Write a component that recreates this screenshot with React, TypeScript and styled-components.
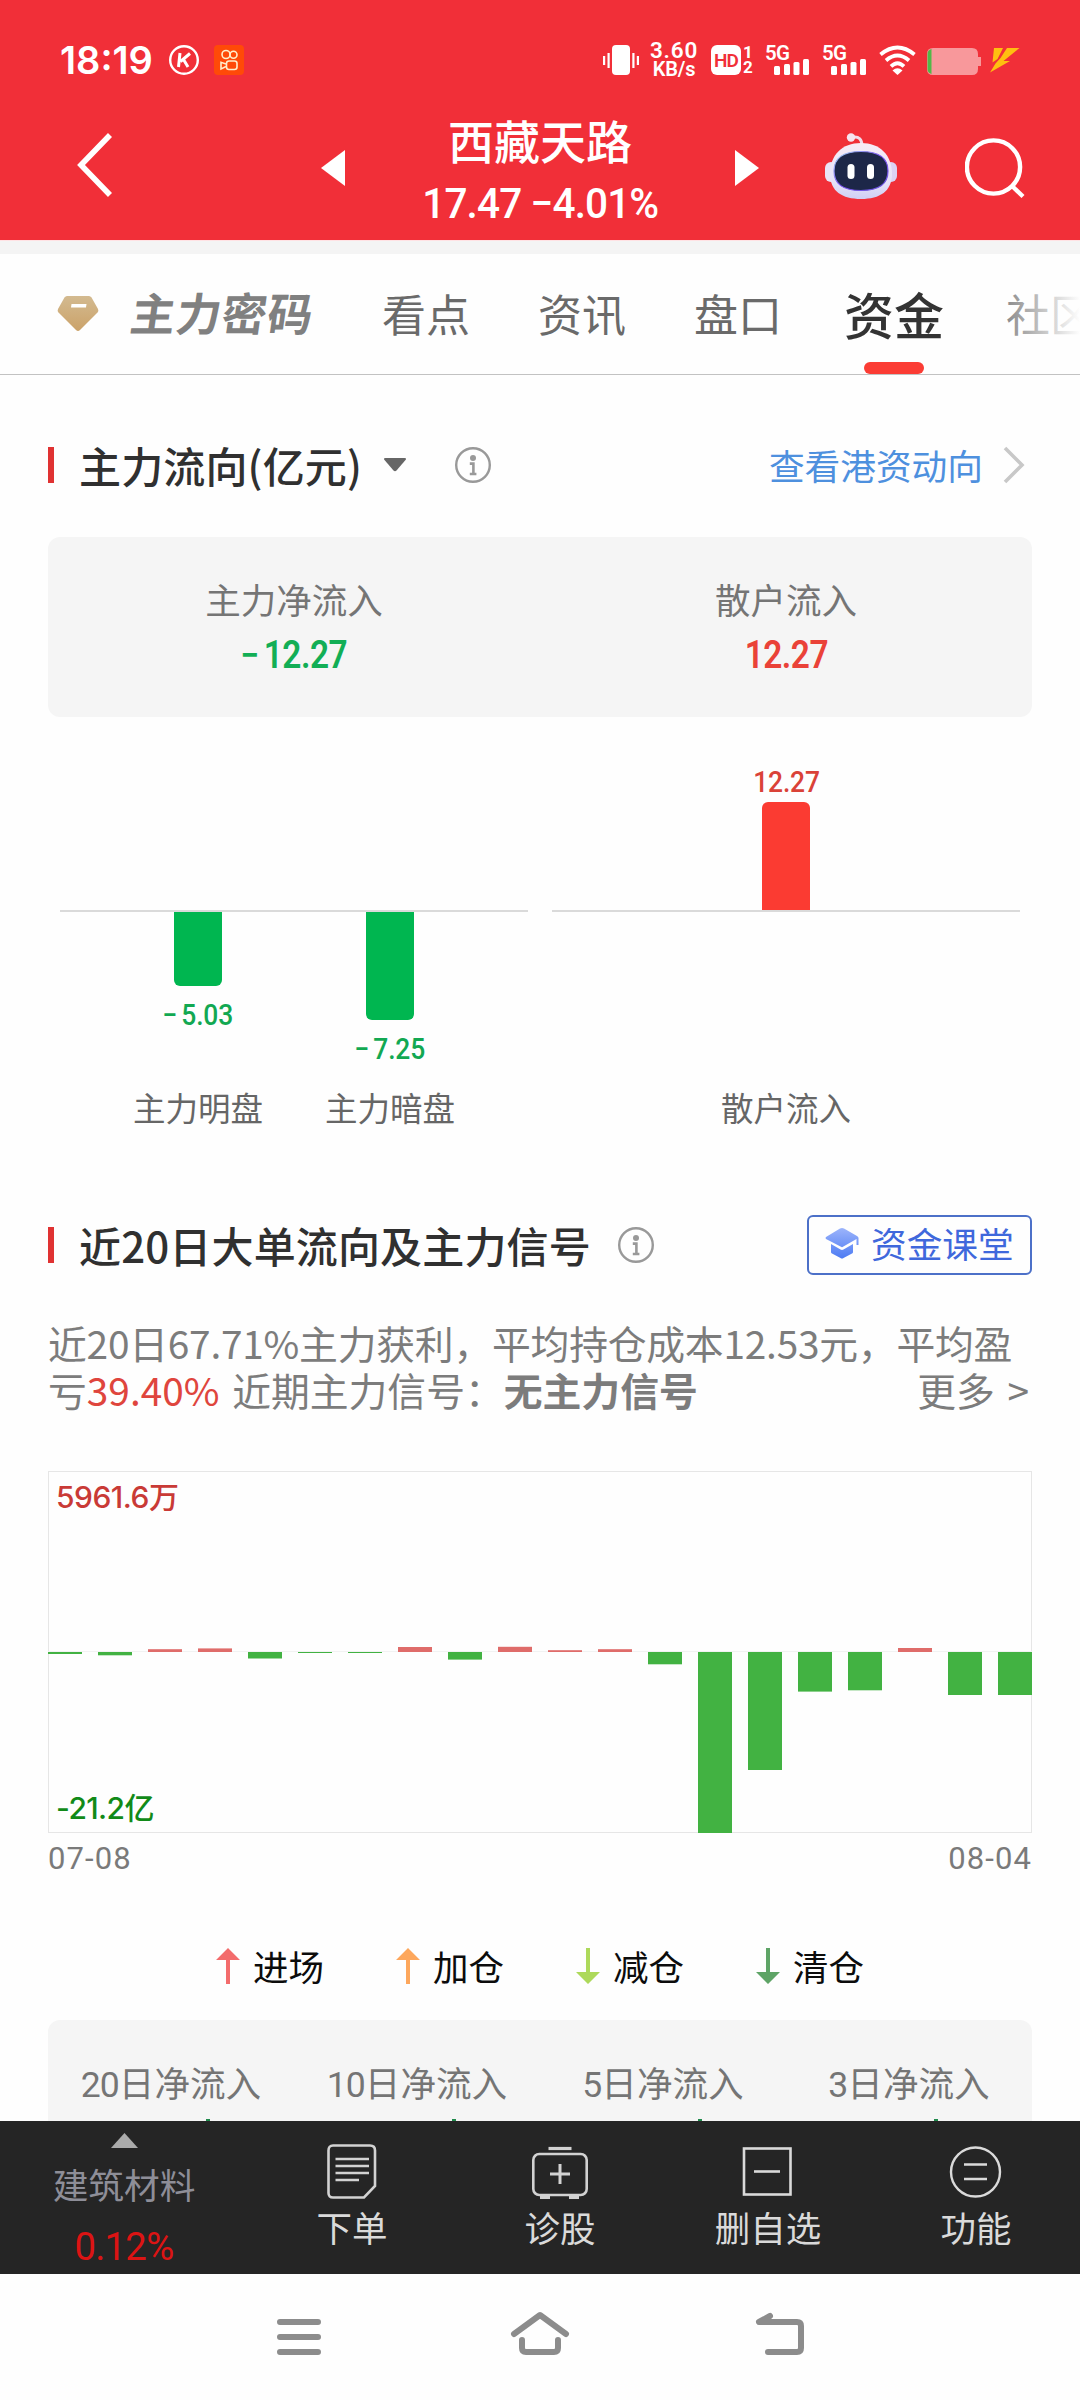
import React from "react";
import styled, { createGlobalStyle } from "styled-components";

const CJK = `"Noto Sans CJK SC", "Noto Sans", sans-serif`;
const NUM = `Roboto, "Noto Sans CJK SC", sans-serif`;

const Global = createGlobalStyle`
  * { box-sizing: border-box; }
  body { margin: 0; background: #fefefe; font-family: ${CJK}; }
  svg { display: block; flex: none; }
`;

const Screen = styled.div`
  width: 1080px;
  height: 2400px;
  overflow: hidden;
  display: flex;
  flex-direction: column;
  background: #fefefe;
`;

/* ---------- status bar ---------- */
const StatusBar = styled.div`
  height: 106px;
  padding: 14px 60px 0 60px;
  background: #f12f38;
  color: #fff;
  display: flex;
  align-items: center;
  font-family: ${NUM};
`;
const Clock = styled.span`
  font: 600 38px/50px Inter, ${NUM};
  letter-spacing: 0;
  width: 109px;
  white-space: nowrap;
`;
const StatusRight = styled.div`
  margin-left: auto;
  display: flex;
  align-items: center;
`;
const Speed = styled.div`
  width: 60px;
  margin-left: 5px;
  margin-right: 7px;
  display: flex;
  flex-direction: column;
  align-items: center;
  font: 600 22.5px/19px ${NUM};
  letter-spacing: 0.8px;
  white-space: nowrap;
`;
const SpeedUnit = styled.span`
  font-size: 20px;
  letter-spacing: -0.2px;
`;
const HdWrap = styled.div`
  display: flex;
  width: 54px;
  gap: 2px;
`;
const HdBadge = styled.div`
  width: 30px;
  height: 30px;
  border-radius: 6px;
  background: #fff;
  color: #f12f38;
  font: 600 19px/31px ${NUM};
  letter-spacing: -1px;
  text-align: center;
`;
const SimNumbers = styled.div`
  height: 30px;
  font: 700 17px/15px ${NUM};
  display: flex;
  flex-direction: column;
  align-items: center;
  justify-content: space-between;
`;
const Signal = styled.div`
  width: 57px;
  height: 30px;
  display: flex;
  position: relative;
`;
const SignalLabel = styled.span`
  font: 600 20.5px/16px ${NUM};
  letter-spacing: -0.8px;
`;
const SignalBars = styled.svg`
  position: absolute;
  left: 9px;
  bottom: 0;
`;

/* ---------- title bar ---------- */
const TitleBar = styled.div`
  height: 134px;
  padding-bottom: 6px;
  background: #f12f38;
  color: #fff;
  display: flex;
  align-items: center;
`;
const BackSlot = styled.div`
  padding: 0 209px 8px 77px;
`;
const StockTitle = styled.div`
  width: 390px;
  display: flex;
  flex-direction: column;
  align-items: center;
`;
const StockName = styled.div`
  padding-top: 6px;
  font: 500 46px/62px ${CJK};
`;
const StockPrice = styled.div`
  font: 500 42px/68px ${NUM};
  letter-spacing: -0.9px;
  transform: scaleX(0.965);
  white-space: pre;
`;
const RobotSlot = styled.div`
  padding: 0 68px 6px 66px;
`;

/* ---------- tabs ---------- */
const Gap = styled.div`
  height: 14px;
  background: #f4f4f4;
  border-top: 1px solid #ffe2e4;
`;
const Tabs = styled.div`
  height: 121px;
  border-bottom: 1px solid #c2c2c2;
  display: flex;
  align-items: stretch;
  position: relative;
  overflow: hidden;
`;
const VipTab = styled.div`
  width: 348px;
  flex: none;
  padding-left: 48px;
  display: flex;
  align-items: center;
  gap: 23px;
`;
const VipLabel = styled.span`
  padding-bottom: 4px;
  font: 700 45px/60px ${CJK};
  letter-spacing: 0.6px;
  color: #808080;
  transform: skewX(-8deg);
`;
const Tab = styled.div<{ $active?: boolean }>`
  width: 156px;
  flex: none;
  height: 120px;
  display: flex;
  flex-direction: column;
  align-items: center;
  padding-top: ${(p) => (p.$active ? 28 : 29)}px;
  font: ${(p) => (p.$active ? "500 50px/62px" : "400 44px/60px")} ${CJK};
  color: ${(p) => (p.$active ? "#333" : "#6a6a6a")};
`;
const Indicator = styled.div`
  width: 60px;
  height: 12px;
  margin-top: 18px;
  border-radius: 6px;
  background: #fb3c34;
`;
const TabFade = styled.div`
  position: absolute;
  right: 0;
  top: 0;
  width: 96px;
  height: 120px;
  background: linear-gradient(90deg, rgba(254, 254, 254, 0), #fefefe);
`;

/* ---------- content ---------- */
const Content = styled.div`
  height: 1746px;
  overflow: hidden;
  padding: 0 48px;
  display: flex;
  flex-direction: column;
`;
const SectionHead = styled.div<{ $top: number; $bottom: number }>`
  margin: ${(p) => p.$top}px 0 ${(p) => p.$bottom}px;
  height: 60px;
  flex: none;
  display: flex;
  align-items: center;
`;
const Marker = styled.i`
  width: 6px;
  height: 36px;
  background: #e03232;
  margin-right: 25px;
`;
const SectionTitle = styled.h2`
  margin: 0;
  font: 500 42px/60px ${CJK};
  letter-spacing: 0.15px;
  color: #303030;
  white-space: nowrap;
`;
const InfoSlot = styled.div<{ $left: number }>`
  margin-left: ${(p) => p.$left}px;
`;
const LinkMore = styled.div`
  margin-left: auto;
  padding-right: 7px;
  display: flex;
  align-items: center;
  gap: 20px;
  font: 400 35.7px/58px ${CJK};
  color: #4e90de;
`;
const ClassButton = styled.div`
  margin-left: auto;
  width: 225px;
  height: 60px;
  border: 2px solid #4c70c8;
  border-radius: 6px;
  padding: 0 0 4px 16px;
  display: flex;
  align-items: center;
  gap: 12px;
  font: 400 35.7px/54px ${CJK};
  color: #3f68dc;
  white-space: nowrap;
`;

const Card = styled.div`
  height: 180px;
  flex: none;
  border-radius: 12px;
  background: #f5f5f5;
  display: flex;
  padding-top: 38px;
`;
const Metric = styled.div`
  flex: 1;
  display: flex;
  flex-direction: column;
  align-items: center;
`;
const MetricLabel = styled.span`
  font: 400 35.5px/48px ${CJK};
  color: #757575;
`;
const MetricValue = styled.span<{ $up?: boolean }>`
  margin-top: 2px;
  font: 600 38px/60px ${NUM};
  letter-spacing: -0.6px;
  transform: scaleX(0.88);
  color: ${(p) => (p.$up ? "#ea4238" : "#12ae55")};
`;
const Minus = styled.span`
  margin-right: 0.16em;
`;

const FlowChart = styled.div`
  display: flex;
  gap: 24px;
  padding: 0 12px;
`;
const Panel = styled.div`
  width: 468px;
  display: grid;
  grid-template-rows: 195px 171px 47px;
`;
const PanelRow = styled.div<{ $axis?: boolean }>`
  display: flex;
  justify-content: center;
  border-bottom: ${(p) => (p.$axis ? "2px solid #dadada" : "none")};
`;
const BarCell = styled.div<{ $end?: boolean }>`
  width: 192px;
  display: flex;
  flex-direction: column;
  align-items: center;
  justify-content: ${(p) => (p.$end ? "flex-end" : "flex-start")};
  font: 400 32.5px/48px ${CJK};
  color: #666;
`;
const FlowBar = styled.div<{ $up?: boolean }>`
  width: 48px;
  border-radius: ${(p) => (p.$up ? "6px 6px 0 0" : "0 0 6px 6px")};
  background: ${(p) => (p.$up ? "#fb3b32" : "#00b650")};
`;
const FlowValue = styled.span<{ $up?: boolean }>`
  margin-top: ${(p) => (p.$up ? 0 : 9)}px;
  font: 500 29px/40px ${NUM};
  letter-spacing: -0.2px;
  transform: scaleX(0.91);
  color: ${(p) => (p.$up ? "#da4238" : "#12a852")};
`;

const Paragraph = styled.div`
  padding-top: 1px;
  font: 400 38.8px/47px ${CJK};
  color: #7c7c7c;
  white-space: pre;
`;
const ParagraphLine = styled.div<{ $tight?: boolean }>`
  height: 47px;
  display: flex;
  justify-content: space-between;
  letter-spacing: ${(p) => (p.$tight ? "-0.22px" : "0")};
  word-spacing: ${(p) => (p.$tight ? "0" : "4px")};
  padding-right: 3px;
`;
const Rate = styled.span`
  color: #df453d;
`;
const Strong = styled.b`
  font-weight: 700;
`;

const SignalChart = styled.div`
  margin-top: 58px;
  height: 362px;
  flex: none;
  position: relative;
  padding: 2px 8px 1px;
  display: flex;
  flex-direction: column;
  justify-content: space-between;
  align-items: flex-start;
`;
const ChartCanvas = styled.svg`
  position: absolute;
  left: 0;
  top: 0;
`;
const ScaleLabel = styled.span<{ $up?: boolean }>`
  position: relative;
  font: 500 30px/48px Inter, ${CJK};
  letter-spacing: ${(p) => (p.$up ? -0.5 : -0.6)}px;
  color: ${(p) => (p.$up ? "#c93a36" : "#118a18")};
`;
const Dates = styled.div`
  height: 50px;
  flex: none;
  padding-top: 1px;
  display: flex;
  justify-content: space-between;
  font: 400 31px/50px ${NUM};
  letter-spacing: 1.1px;
  color: #7a7a7a;
`;
const Legend = styled.div`
  margin: 59px 0 30px;
  padding-left: 168px;
  height: 48px;
  flex: none;
  display: flex;
`;
const LegendItem = styled.div`
  width: 180px;
  display: flex;
  align-items: center;
  gap: 13px;
  font: 400 35.5px/48px ${CJK};
  color: #0c0c0c;
`;
const NetTable = styled.div`
  height: 180px;
  flex: none;
  border-radius: 12px;
  background: #f5f5f5;
  display: flex;
  padding-top: 41px;
`;
const NetCell = styled.div`
  width: 246px;
  display: flex;
  flex-direction: column;
  align-items: center;
  font: 400 35.6px/48px ${NUM};
  color: #757575;
`;
const Days = styled.span`
  letter-spacing: -1px;
`;
const NetTick = styled.i<{ $shift: number }>`
  width: 4px;
  height: 3px;
  margin: 10px 0 0 ${(p) => p.$shift * 2}px;
  background: #1f8a4c;
`;

/* ---------- toolbar ---------- */
const Toolbar = styled.div`
  height: 153px;
  flex: none;
  background: #252525;
  display: flex;
`;
const Sector = styled.div`
  width: 248px;
  padding-top: 12px;
  display: flex;
  flex-direction: column;
  align-items: center;
`;
const SectorName = styled.span`
  margin-top: 12px;
  font: 400 35.7px/48px ${CJK};
  color: #8e8e98;
`;
const SectorRate = styled.span`
  margin-top: 15px;
  font: 400 39.5px/48px ${NUM};
  letter-spacing: -0.8px;
  transform: scaleX(0.97);
  color: #dc1414;
`;
const Tool = styled.div`
  width: 208px;
  padding-top: 22px;
  display: flex;
  flex-direction: column;
  align-items: center;
  font: 400 35.5px/44px ${CJK};
  color: #dadada;
`;
const ToolIcon = styled.svg`
  margin-bottom: 6px;
`;
const SystemNav = styled.div`
  height: 126px;
  flex: none;
  display: flex;
  justify-content: center;
  padding-top: 36px;
  gap: 178px;
`;

const Signal5G = () => (
  <Signal>
    <SignalLabel>5G</SignalLabel>
    <SignalBars width="35" height="16" fill="#fff">
      <rect x="0" y="7" width="6" height="9" rx="1.5" />
      <rect x="10" y="5" width="6" height="11" rx="1.5" />
      <rect x="19.5" y="3" width="6" height="13" rx="1.5" />
      <rect x="29" y="0" width="6" height="16" rx="1.5" />
    </SignalBars>
  </Signal>
);

const Info = () => (
  <svg width="36" height="36" viewBox="0 0 36 36" fill="none" stroke="#999">
    <circle cx="18" cy="18" r="16.8" strokeWidth="2.4" />
    <circle cx="18" cy="11" r="3" fill="#999" stroke="none" />
    <path d="M14.8 16.6h3.6v10.2M14.8 27h6.6" strokeWidth="2.6" />
  </svg>
);

const Arrow = ({ color, down }: { color: string; down?: boolean }) => (
  <svg width="24" height="36" viewBox="0 0 24 36" fill={color}>
    <path
      transform={down ? "rotate(180 12 18)" : undefined}
      d="M12 0L24 12H14V36H10V12H0Z"
    />
  </svg>
);

const Robot = () => (
  <svg width="72" height="68" viewBox="0 0 72 68">
    <defs>
      <linearGradient id="head" x1="0" y1="0" x2="0" y2="1">
        <stop offset="0" stopColor="#f7ecf6" />
        <stop offset="0.7" stopColor="#e6e2f8" />
        <stop offset="1" stopColor="#cfcff4" />
      </linearGradient>
      <linearGradient id="rim" x1="0" y1="0" x2="1" y2="1">
        <stop offset="0" stopColor="#a8dcf2" />
        <stop offset="0.5" stopColor="#7a4ff0" />
        <stop offset="1" stopColor="#6a58dc" />
      </linearGradient>
    </defs>
    <path d="M28 4q9-1 9 9" fill="none" stroke="#f1dcea" strokeWidth="3" />
    <circle cx="26" cy="4.5" r="4.2" fill="#f6e4ef" />
    <rect x="0" y="29" width="12" height="20" rx="6" fill="#e9e4f6" />
    <rect x="60" y="29" width="12" height="20" rx="6" fill="#dcd2f3" />
    <path
      d="M36 10C55 10 67 22 67 41C67 58 55 66 36 66S5 58 5 41C5 22 17 10 36 10Z"
      fill="url(#head)"
    />
    <path
      d="M36 18.5C54 18.5 63 25 63 38C63 51 54 57.5 36 57.5S9 51 9 38C9 25 18 18.5 36 18.5Z"
      fill="#1d2748"
      stroke="url(#rim)"
      strokeWidth="1.2"
    />
    <rect x="22.5" y="31" width="7" height="15" rx="3.5" fill="#fff" />
    <rect x="42" y="31" width="7" height="15" rx="3.5" fill="#fff" />
  </svg>
);

const bars = [
  -2, -3.3, 2.8, 3.6, -6.5, -1, -1, 5, -7.6, 5.2, 1.8, 2.8, -12.3, -181, -118,
  -39.6, -38.3, 4, -43, -43,
];

export default function App() {
  return (
    <Screen>
      <Global />
      <StatusBar>
        <Clock>18:19</Clock>
        <svg width="30" height="30" viewBox="0 0 30 30" fill="none" stroke="#fff">
          <circle cx="15" cy="15" r="13.8" strokeWidth="2.4" />
          <path d="M11 8L9.5 22M21 8.5L11.5 16.5M14.5 14.5L19 22" strokeWidth="3" />
        </svg>
        <svg width="45" height="30" viewBox="-15 0 45 30" fill="none" stroke="#ffeecb">
          <rect width="30" height="30" rx="4" fill="#ff4a08" stroke="none" />
          <circle cx="12" cy="9.5" r="4" strokeWidth="1.6" />
          <circle cx="19.5" cy="9.8" r="3.5" strokeWidth="1.6" />
          <rect x="12.5" y="16" width="10.5" height="8.5" rx="2.5" strokeWidth="1.6" />
          <path d="M12 19L7 17.3V24L12 21.5" strokeWidth="1.6" />
        </svg>
        <StatusRight>
          <svg width="36" height="30" viewBox="0 0 36 30" fill="#fff">
            <rect x="9" width="18" height="30" rx="4" />
            <rect x="0" y="11" width="2.2" height="9" />
            <rect x="4.5" y="8" width="2.2" height="15" />
            <rect x="29.3" y="8" width="2.2" height="15" />
            <rect x="33.8" y="11" width="2.2" height="9" />
          </svg>
          <Speed>
            <span>3.60</span>
            <SpeedUnit>KB/s</SpeedUnit>
          </Speed>
          <HdWrap>
            <HdBadge>HD</HdBadge>
            <SimNumbers>
              <span>1</span>
              <span>2</span>
            </SimNumbers>
          </HdWrap>
          <Signal5G />
          <Signal5G />
          <svg width="37" height="30" viewBox="0 0 37 30" fill="none" stroke="#fff" strokeWidth="3.8">
            <path d="M1.5 9.5Q18.5 -4.5 35.5 9.5" />
            <path d="M7 15.5Q18.5 5.5 30 15.5" />
            <path d="M12 21.3Q18.5 15 25 21.3" />
            <path d="M13.5 25.5Q18.5 21 23.5 25.5L18.5 30Z" fill="#fff" stroke="none" />
          </svg>
          <svg width="104" height="30" viewBox="-11 0 104 30">
            <path d="M6 3H45Q51 3 51 9V12H54V21H51V24Q51 30 45 30H6Q0 30 0 24V9Q0 3 6 3Z" fill="#f8989b" />
            <path d="M4.5 4V29Q0.5 28 0.5 24V9Q0.5 5 4.5 4Z" fill="#52b848" />
            <path d="M67 3H76L70.500 14L65.500 17.500ZM80 3H92.500L76.500 16H83L63 27.500L68.500 18.500L73.500 13Z" fill="#ffbf10" />
          </svg>
        </StatusRight>
      </StatusBar>
      <TitleBar>
        <BackSlot>
          <svg width="35" height="66" viewBox="0 0 35 66" fill="none" stroke="#fff" strokeWidth="5.6">
            <path d="M33 2L4 32L33 62" />
          </svg>
        </BackSlot>
        <svg width="24" height="40" viewBox="0 0 24 40" fill="#fff">
          <path d="M24 0V36L0 18Z" />
        </svg>
        <StockTitle>
          <StockName>西藏天路</StockName>
          <StockPrice>17.47 −4.01%</StockPrice>
        </StockTitle>
        <svg width="24" height="40" viewBox="0 0 24 40" fill="#fff">
          <path d="M0 0V36L24 18Z" />
        </svg>
        <RobotSlot>
          <Robot />
        </RobotSlot>
        <svg width="60" height="64" viewBox="0 0 60 64" fill="none" stroke="#fff" strokeWidth="4.4">
          <circle cx="28.5" cy="29" r="26.6" />
          <path d="M47 48L58 58.5" />
        </svg>
      </TitleBar>
      <Gap />
      <Tabs>
        <VipTab>
          <svg width="60" height="60" viewBox="-10 -12 60 60">
            <defs>
              <linearGradient id="gem" x1="0" y1="0" x2="0" y2="1">
                <stop offset="0" stopColor="#d3ba90" />
                <stop offset="1" stopColor="#cba269" />
              </linearGradient>
            </defs>
            <path d="M9 0H31Q32.5 0 33.5 1.5L40 13Q41 15 39.5 16.5L22 34Q20 36 18 34L0.5 16.5Q-1 15 0 13L6.5 1.5Q7.5 0 9 0Z" fill="url(#gem)" />
            <path d="M13.5 8H28.5L28 11.5H13Z" fill="#fff" />
          </svg>
          <VipLabel>主力密码</VipLabel>
        </VipTab>
        <Tab>看点</Tab>
        <Tab>资讯</Tab>
        <Tab>盘口</Tab>
        <Tab $active>
          资金
          <Indicator />
        </Tab>
        <Tab>社区</Tab>
        <TabFade />
      </Tabs>

      <Content>
        <SectionHead $top={60} $bottom={42}>
          <Marker />
          <SectionTitle>主力流向(亿元)</SectionTitle>
          <InfoSlot $left={21}>
            <svg width="24" height="14" viewBox="0 0 24 14" fill="#666">
              <path d="M2.5 0H21.5Q24 0 22.5 2L13.5 12.5Q12 14 10.5 12.5L1.5 2Q0 0 2.5 0Z" />
            </svg>
          </InfoSlot>
          <InfoSlot $left={48}>
            <Info />
          </InfoSlot>
          <LinkMore>
            查看港资动向
            <svg width="22" height="38" viewBox="0 0 22 38" fill="none" stroke="#c8c8c8" strokeWidth="3.6">
              <path d="M2 2L19 19L2 36" />
            </svg>
          </LinkMore>
        </SectionHead>

        <Card>
          <Metric>
            <MetricLabel>主力净流入</MetricLabel>
            <MetricValue>
              <Minus>−</Minus>12.27
            </MetricValue>
          </Metric>
          <Metric>
            <MetricLabel>散户流入</MetricLabel>
            <MetricValue $up>12.27</MetricValue>
          </Metric>
        </Card>

        <FlowChart>
          <Panel>
            <PanelRow $axis />
            <PanelRow>
              <BarCell>
                <FlowBar style={{ height: 74 }} />
                <FlowValue>
                  <Minus>−</Minus>5.03
                </FlowValue>
              </BarCell>
              <BarCell>
                <FlowBar style={{ height: 108 }} />
                <FlowValue>
                  <Minus>−</Minus>7.25
                </FlowValue>
              </BarCell>
            </PanelRow>
            <PanelRow>
              <BarCell>主力明盘</BarCell>
              <BarCell>主力暗盘</BarCell>
            </PanelRow>
          </Panel>
          <Panel>
            <PanelRow $axis>
              <BarCell $end>
                <FlowValue $up>12.27</FlowValue>
                <FlowBar $up style={{ height: 108 }} />
              </BarCell>
            </PanelRow>
            <PanelRow />
            <PanelRow>
              <BarCell>散户流入</BarCell>
            </PanelRow>
          </Panel>
        </FlowChart>

        <SectionHead $top={85} $bottom={43}>
          <Marker />
          <SectionTitle>近20日大单流向及主力信号</SectionTitle>
          <InfoSlot $left={27}>
            <Info />
          </InfoSlot>
          <ClassButton>
            <svg width="34" height="32" viewBox="0 0 34 32">
              <defs>
                <linearGradient id="cap" x1="0" y1="0" x2="0" y2="1">
                  <stop offset="0" stopColor="#9cb4fb" />
                  <stop offset="1" stopColor="#4d7bf3" />
                </linearGradient>
              </defs>
              <path
                d="M15 1.5Q17 0.5 19 1.5L32 9Q33.5 10 33.5 11V18H31.5V12L17.5 20Q17 20.3 16.5 20L1 12Q0 11 1 10ZM6 17L15.5 22.5Q17 23.3 18.5 22.5L28 17V25Q28 26 27 26.5L18.5 31Q17 32 15.5 31L7 26.5Q6 26 6 25Z"
                fill="url(#cap)"
              />
            </svg>
            资金课堂
          </ClassButton>
        </SectionHead>

        <Paragraph>
          <ParagraphLine $tight>近20日67.71%主力获利，平均持仓成本12.53元，平均盈</ParagraphLine>
          <ParagraphLine>
            <span>
              亏<Rate>39.40%</Rate> 近期主力信号：<Strong>无主力信号</Strong>
            </span>
            <span>更多 &gt;</span>
          </ParagraphLine>
        </Paragraph>

        <SignalChart>
          <ChartCanvas width="984" height="362">
            <rect x="0.5" y="0.5" width="983" height="361" fill="none" stroke="#e6e6e6" />
            <path d="M0 180.5H984" stroke="#f2f2f2" />
            {bars.map((v, i) => (
              <rect
                key={i}
                x={i * 50}
                y={v > 0 ? 181 - v : 181}
                width="34"
                height={Math.abs(v)}
                fill={v > 0 ? "#df6c6a" : "#42b242"}
              />
            ))}
          </ChartCanvas>
          <ScaleLabel $up>5961.6万</ScaleLabel>
          <ScaleLabel>-21.2亿</ScaleLabel>
        </SignalChart>
        <Dates>
          <span>07-08</span>
          <span>08-04</span>
        </Dates>

        <Legend>
          <LegendItem>
            <Arrow color="#f36c6c" />
            进场
          </LegendItem>
          <LegendItem>
            <Arrow color="#fda75c" />
            加仓
          </LegendItem>
          <LegendItem>
            <Arrow color="#add95a" down />
            减仓
          </LegendItem>
          <LegendItem>
            <Arrow color="#5ea466" down />
            清仓
          </LegendItem>
        </Legend>

        <NetTable>
          <NetCell>
            <span>
              <Days>20</Days>日净流入
            </span>
            <NetTick $shift={37} />
          </NetCell>
          <NetCell>
            <span>
              <Days>10</Days>日净流入
            </span>
            <NetTick $shift={37} />
          </NetCell>
          <NetCell>
            <span>
              <Days>5</Days>日净流入
            </span>
            <NetTick $shift={37} />
          </NetCell>
          <NetCell>
            <span>
              <Days>3</Days>日净流入
            </span>
            <NetTick $shift={27} />
          </NetCell>
        </NetTable>
      </Content>

      <Toolbar>
        <Sector>
          <svg width="27" height="15" viewBox="0 0 27 15" fill="#ababab">
            <path d="M13.5 0L27 15H0Z" />
          </svg>
          <SectorName>建筑材料</SectorName>
          <SectorRate>0.12%</SectorRate>
        </Sector>
        <Tool>
          <ToolIcon width="56" height="56" viewBox="0 0 56 56" fill="none" stroke="#d2d2d2" strokeWidth="2.6">
            <path d="M9 2.5H46Q51 2.5 51 7.5V43L40 54.5H9Q4.500 54.500 4.500 50V7.500Q4.500 2.500 9 2.500Z" />
            <path d="M11.500 16H45M11.500 23H45M11.500 30H45M11.500 37H35" />
          </ToolIcon>
          下单
        </Tool>
        <Tool>
          <ToolIcon width="56" height="56" viewBox="0 0 56 56" fill="none" stroke="#d2d2d2" strokeWidth="2.6">
            <path d="M16.5 5.5H39.5" strokeWidth="3.2" />
            <rect x="1.3" y="11" width="53.4" height="41" rx="6" />
            <path d="M28 21V41M18 31H38" strokeWidth="3" />
            <path d="M8 54H18M37 54H47" strokeWidth="4" />
          </ToolIcon>
          诊股
        </Tool>
        <Tool>
          <ToolIcon width="56" height="56" viewBox="0 0 56 56" fill="none" stroke="#dadada" strokeWidth="2.6">
            <rect x="4" y="5.5" width="46.5" height="46" />
            <path d="M14 28.5H40" />
          </ToolIcon>
          删自选
        </Tool>
        <Tool>
          <ToolIcon width="56" height="56" viewBox="0 0 56 56" fill="none" stroke="#dadada" strokeWidth="2.4">
            <circle cx="27.5" cy="29" r="24.5" />
            <path d="M16 21.5H39M16 36H39" />
          </ToolIcon>
          功能
        </Tool>
      </Toolbar>

      <SystemNav>
        <svg width="62" height="48" viewBox="0 0 62 48" fill="none" stroke="#8c8c8c" strokeWidth="6" strokeLinecap="round">
          <path d="M11 12H49M11 27H49M11 42H49" />
        </svg>
        <svg width="62" height="48" viewBox="0 0 62 48" fill="none" stroke="#8c8c8c" strokeWidth="6" strokeLinecap="round" strokeLinejoin="round">
          <path d="M5 24L31 5L57 24M13 30V38Q13 42 17 42H45Q49 42 49 38V30" />
        </svg>
        <svg width="62" height="48" viewBox="0 0 62 48" fill="none" stroke="#8c8c8c" strokeWidth="6" strokeLinecap="round" strokeLinejoin="round">
          <path d="M21 6L10 12H48Q52 12 52 16V38Q52 42 48 42H19" />
        </svg>
      </SystemNav>
    </Screen>
  );
}
